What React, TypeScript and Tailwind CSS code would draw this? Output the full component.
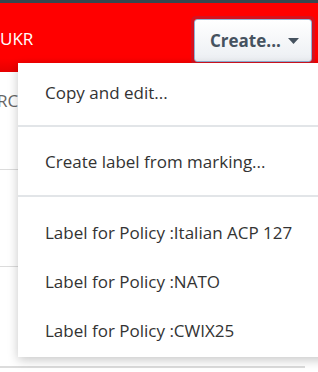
import { useState } from "react";

const policies = ["Italian ACP 127", "NATO", "CWIX25"];

function MenuItem({ label }: { label: string }) {
  return (
    <div className="flex h-[49px] items-center pl-[27px] text-[17px] text-[#333] whitespace-nowrap">
      {label}
    </div>
  );
}

export default function App() {
  const [open] = useState(true);

  return (
    <div className="relative h-[372px] w-[318px] overflow-hidden bg-white font-['Open_Sans',sans-serif]">
      <div className="h-[3px] bg-[#37474f]" />

      <div className="flex h-[69px] items-start justify-between bg-[#ff0000] bg-gradient-to-b from-[#ff0000] from-80% to-[#e60000]">
        <span className="mt-[26px] text-[17px] leading-5 text-white">UKR</span>
        <div className="mr-[3px] mt-[13px] rounded-[5px] border-[3px] border-[#d5121f] p-0">
          <button className="flex h-[43px] w-[118px] items-center gap-[7px] rounded-[3px] border border-[#8fb2d6] bg-gradient-to-b from-white to-[#eceff3] pl-[15px] text-[17px] font-bold text-[#45525f]">
            Create...
            <svg width="11" height="6" viewBox="0 0 11 6" className="mt-px">
              <path d="M0 0h11L5.5 6z" fill="#45525f" />
            </svg>
          </button>
        </div>
      </div>

      <div className="flex flex-col">
        <div className="h-[98px] border-b border-[#dcdcdc] pt-[16px]">
          <span className="ml-[-3px] text-[17px] text-[#666]">RC</span>
        </div>
        <div className="h-[97px] border-b border-[#dcdcdc]" />
        <div className="mr-[13px] h-[101px] border-b-2 border-[#dcdcdc]" />
      </div>

      {open && (
        <div className="absolute left-[18px] top-[63px] w-[312px] bg-white pb-[2px] pt-[4px] shadow-[0_3px_10px_rgba(0,0,0,0.22)]">
          <div className="h-px" />
          <MenuItem label="Copy and edit..." />
          <div className="pb-[10px] pt-[8px]">
            <div className="h-[2px] bg-[#e2e5e8]" />
          </div>
          <MenuItem label="Create label from marking..." />
          <div className="pb-[11px] pt-[9px]">
            <div className="h-[2px] bg-[#e2e5e8]" />
          </div>
          {policies.map((p) => (
            <MenuItem key={p} label={`Label for Policy :${p}`} />
          ))}
        </div>
      )}
    </div>
  );
}
